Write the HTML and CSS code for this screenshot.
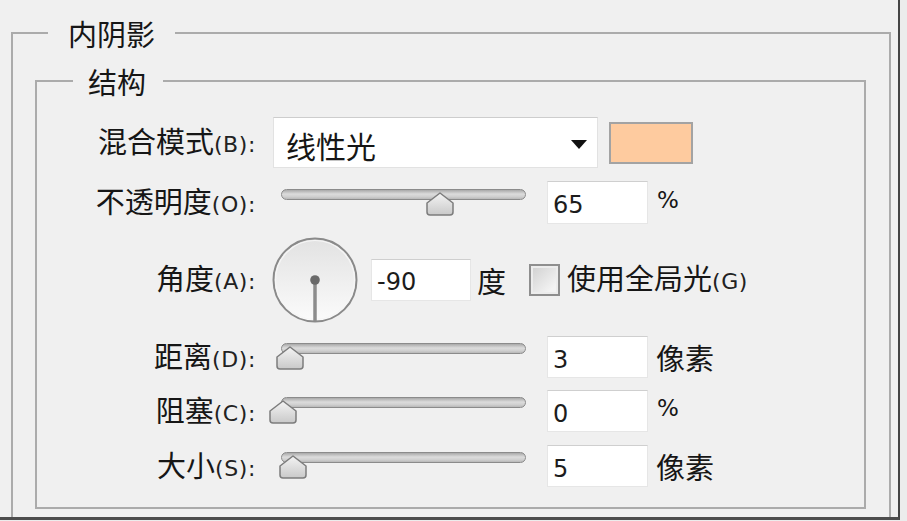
FILE: index.html
```html
<!DOCTYPE html>
<html lang="zh-CN">
<head>
<meta charset="utf-8">
<title>内阴影</title>
<link rel="stylesheet" href="styles.css">
</head>
<body>
<div class="window">
  <fieldset class="outer">
    <legend class="lg-outer">内阴影</legend>
    <fieldset class="inner">
      <legend class="lg-inner">结构</legend>

      <div class="row r1">
        <label class="lbl">混合模式<span class="k">(B):</span></label>
        <div class="select"><span class="sel-text">线性光</span><i class="caret"></i></div>
        <div class="swatch"></div>
      </div>

      <div class="row r2">
        <label class="lbl">不透明度<span class="k">(O):</span></label>
        <div class="slider"><div class="track"></div><svg class="thumb" style="left:145px" viewBox="0 0 28 24" width="28" height="24"><defs><linearGradient id="tg1" x1="0" y1="0" x2="0" y2="1"><stop offset="0" stop-color="#f4f4f4"/><stop offset="1" stop-color="#c9c9c9"/></linearGradient></defs><path d="M14 1 L27 11 L27 20 Q27 23 24 23 L4 23 Q1 23 1 20 L1 11 Z" fill="url(#tg1)" stroke="#7c7c7c" stroke-width="1.5" stroke-linejoin="round"/></svg></div>
        <div class="field">65</div>
        <span class="unit pct">%</span>
      </div>

      <div class="row r3">
        <label class="lbl">角度<span class="k">(A):</span></label>
        <svg class="dial" viewBox="0 0 86 86" width="86" height="86">
          <defs><linearGradient id="dg" x1="0" y1="0" x2="0" y2="1"><stop offset="0" stop-color="#e2e2e2"/><stop offset="1" stop-color="#fbfbfb"/></linearGradient></defs>
          <circle cx="43" cy="43" r="41.5" fill="url(#dg)" stroke="#8a8a8a" stroke-width="2"/>
          <circle cx="43" cy="43" r="39.5" fill="none" stroke="#f6f6f6" stroke-width="1.2"/>
          <line x1="43" y1="43" x2="43" y2="84" stroke="#8c8c8c" stroke-width="3.5"/>
          <circle cx="43" cy="43" r="4.8" fill="#6a6a6a"/>
        </svg>
        <div class="field angle">-90</div>
        <span class="unit deg">度</span>
        <div class="check"></div>
        <span class="check-lbl">使用全局光<span class="k">(G)</span></span>
      </div>

      <div class="row r4">
        <label class="lbl">距离<span class="k">(D):</span></label>
        <div class="slider"><div class="track"></div><svg class="thumb" style="left:-5px" viewBox="0 0 28 24" width="28" height="24"><defs><linearGradient id="tg2" x1="0" y1="0" x2="0" y2="1"><stop offset="0" stop-color="#f4f4f4"/><stop offset="1" stop-color="#c9c9c9"/></linearGradient></defs><path d="M14 1 L27 11 L27 20 Q27 23 24 23 L4 23 Q1 23 1 20 L1 11 Z" fill="url(#tg2)" stroke="#7c7c7c" stroke-width="1.5" stroke-linejoin="round"/></svg></div>
        <div class="field">3</div>
        <span class="unit">像素</span>
      </div>

      <div class="row r5">
        <label class="lbl">阻塞<span class="k">(C):</span></label>
        <div class="slider"><div class="track"></div><svg class="thumb" style="left:-12px" viewBox="0 0 28 24" width="28" height="24"><defs><linearGradient id="tg3" x1="0" y1="0" x2="0" y2="1"><stop offset="0" stop-color="#f4f4f4"/><stop offset="1" stop-color="#c9c9c9"/></linearGradient></defs><path d="M14 1 L27 11 L27 20 Q27 23 24 23 L4 23 Q1 23 1 20 L1 11 Z" fill="url(#tg3)" stroke="#7c7c7c" stroke-width="1.5" stroke-linejoin="round"/></svg></div>
        <div class="field">0</div>
        <span class="unit pct">%</span>
      </div>

      <div class="row r6">
        <label class="lbl">大小<span class="k">(S):</span></label>
        <div class="slider"><div class="track"></div><svg class="thumb" style="left:-2px" viewBox="0 0 28 24" width="28" height="24"><defs><linearGradient id="tg4" x1="0" y1="0" x2="0" y2="1"><stop offset="0" stop-color="#f4f4f4"/><stop offset="1" stop-color="#c9c9c9"/></linearGradient></defs><path d="M14 1 L27 11 L27 20 Q27 23 24 23 L4 23 Q1 23 1 20 L1 11 Z" fill="url(#tg4)" stroke="#7c7c7c" stroke-width="1.5" stroke-linejoin="round"/></svg></div>
        <div class="field">5</div>
        <span class="unit">像素</span>
      </div>
    </fieldset>
  </fieldset>
</div>
</body>
</html>
```

FILE: styles.css
```css
html, body {
  margin: 0;
  padding: 0;
}
body {
  background: #ececec;
  font-family: "Noto Sans CJK SC", "Noto Sans", sans-serif;
  color: #161616;
  width: 907px;
  height: 521px;
  overflow: hidden;
}
.window {
  width: 898px;
  height: 517px;
  background: #f0f0f0;
  border-right: 2px solid #454545;
  border-bottom: 3px solid #4d4d4d;
  overflow: hidden;
}
fieldset {
  margin: 0;
  min-inline-size: 0;
  box-sizing: border-box;
  border: 2px solid #ababab;
}
.outer {
  margin: 18px 0 0 11px;
  width: 880px;
  height: 560px;
  padding: 0 23px 0 22px;
}
legend {
  font-size: 29px;
  line-height: 30px;
  height: 30px;
}
.lg-outer {
  margin-left: 13px;
  padding: 0 20px;
}
.inner {
  margin-top: 18px;
  width: 831px;
  height: 443px;
  padding: 21px 0 0 0;
}
.lg-inner {
  margin-left: 36px;
  padding: 0 17px 0 15px;
}
.row {
  display: flex;
  align-items: center;
}
.lbl {
  flex: none;
  width: 219px;
  text-align: right;
  font-size: 29px;
  line-height: 32px;
  white-space: nowrap;
}
.k {
  font-family: "DejaVu Sans", sans-serif;
  font-size: 22px;
  letter-spacing: 0.6px;
  color: #222;
  vertical-align: 1px;
}
.r1 { height: 51px; }
.r2 { height: 43px; margin-top: 13px; }
.r3 { height: 85px; margin-top: 13px; }
.r4 { height: 42px; margin-top: 14px; }
.r5 { height: 42px; margin-top: 12px; }
.r6 { height: 42px; margin-top: 13px; }

.select {
  flex: none;
  margin-left: 17px;
  width: 325px;
  height: 51px;
  box-sizing: border-box;
  background: #fff;
  border: 1px solid #e2e2e2;
  border-top-color: #cdcdcd;
  display: flex;
  align-items: center;
  padding: 0 10px 0 12px;
}
.sel-text {
  flex: 1;
  font-size: 30px;
  line-height: 32px;
  padding-top: 4px;
}
.caret {
  width: 0;
  height: 0;
  border-left: 8px solid transparent;
  border-right: 8px solid transparent;
  border-top: 9px solid #111;
  margin-top: 3px;
}
.swatch {
  flex: none;
  margin-left: 11px;
  width: 84px;
  height: 42px;
  box-sizing: border-box;
  background: #fecb9f;
  border: 2px solid #a3a3a3;
}
.slider {
  flex: none;
  position: relative;
  margin-left: 25px;
  width: 245px;
  height: 28px;
  margin-top: -2px;
}
.track {
  margin-top: 1px;
  height: 11px;
  box-sizing: border-box;
  border: 1px solid #8b8b8b;
  border-radius: 6px;
  background: linear-gradient(#a9a9a9, #dcdcdc 45%, #cfcfcf 75%, #b8b8b8);
}
.thumb {
  position: absolute;
  top: 4px;
  display: block;
}
.field {
  flex: none;
  margin-left: 21px;
  width: 101px;
  height: 100%;
  box-sizing: border-box;
  background: #fff;
  border: 1px solid #e6e6e6;
  border-top-color: #cfcfcf;
  font-family: "DejaVu Sans", sans-serif;
  font-size: 24px;
  color: #1c1c1c;
  display: flex;
  align-items: center;
  padding: 5px 0 0 5px;
}
.unit {
  margin-left: 8px;
  font-size: 29px;
  line-height: 32px;
}
.unit.pct {
  font-family: "DejaVu Sans", sans-serif;
  font-size: 23px;
  margin-left: 9px;
  margin-top: -6px;
}
.dial {
  flex: none;
  display: block;
  margin-left: 16px;
}
.field.angle {
  margin-left: 13px;
  width: 100px;
  height: 42px;
  padding-left: 5px;
}
.unit.deg {
  margin-left: 6px;
}
.check {
  flex: none;
  margin-left: 23px;
  width: 31px;
  height: 32px;
  box-sizing: border-box;
  border: 2px solid #8e8e8e;
  background: linear-gradient(135deg, #cfcfcf, #f3f3f3 80%);
  box-shadow: inset 0 0 0 2px #ececec;
}
.check-lbl {
  margin-left: 7px;
  font-size: 29px;
  line-height: 32px;
  white-space: nowrap;
}
```
